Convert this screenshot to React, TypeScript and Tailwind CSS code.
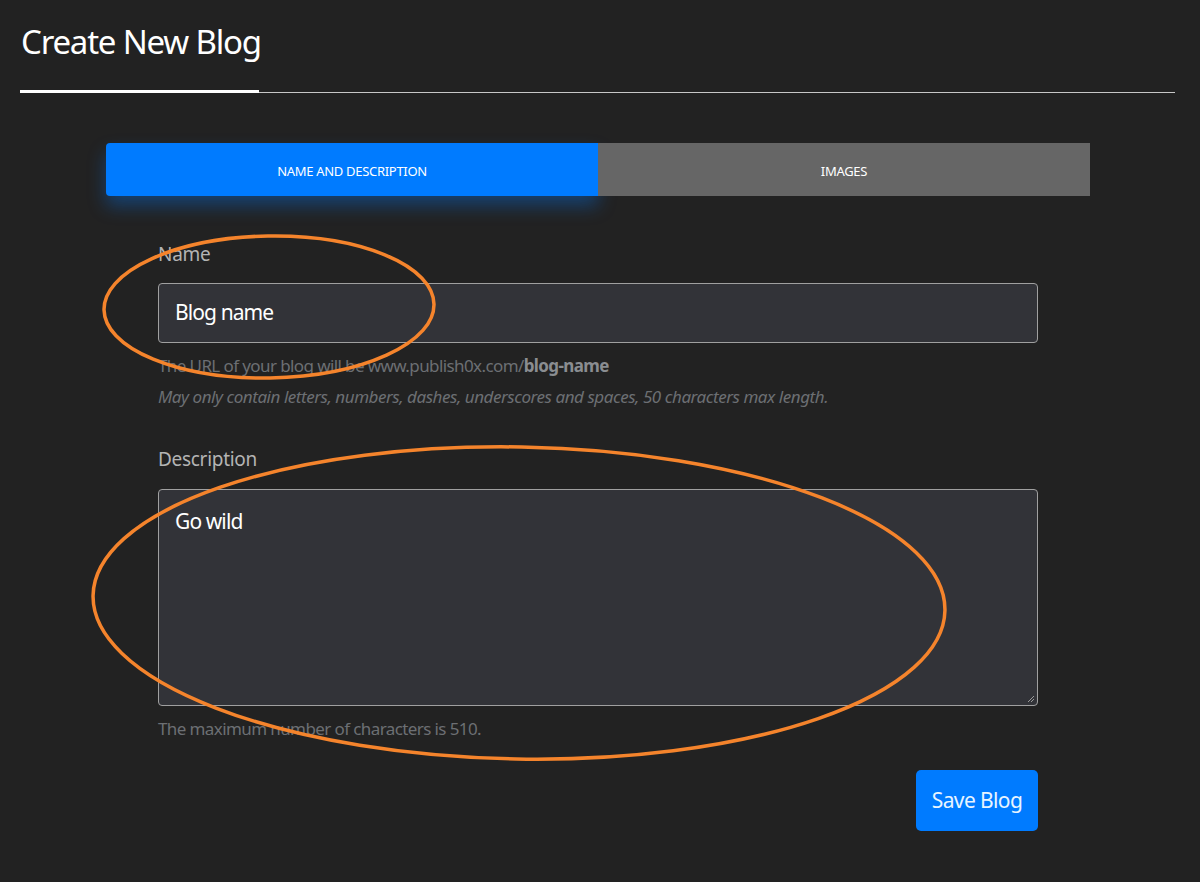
import React from "react";

const FONT = { fontFamily: '"Noto Sans", "Open Sans", Arial, sans-serif' };

function Annotations() {
  return (
    <svg className="pointer-events-none absolute left-0 top-0" width="1200" height="882" fill="none">
      <ellipse cx="269" cy="307" rx="165" ry="71" stroke="#f5842c" strokeWidth="3.5" transform="rotate(-1 269 307)" />
      <ellipse cx="519" cy="603" rx="426" ry="156" stroke="#f5842c" strokeWidth="3.5" transform="rotate(1 519 603)" />
    </svg>
  );
}

export default function App() {
  return (
    <div className="relative h-[882px] w-full overflow-hidden bg-[#222222] text-white" style={FONT}>
      {/* header */}
      <div className="px-5 pt-[20px]">
        <h1 className="pl-px text-[33px] leading-[44px] tracking-[-1.2px] text-white">Create New Blog</h1>
        <div className="mt-[26px] flex items-end">
          <div className="h-[3px] w-[239px] bg-white" />
          <div className="h-px w-[916px] bg-[#c8c8c8]" />
        </div>
      </div>

      {/* tabs + form */}
      <div className="ml-[106px] mt-[50px] w-[984px]">
        <div className="grid grid-cols-2">
          <button className="h-[53px] rounded-l-[4px] bg-[#007bff] pt-[4px] text-[13px] tracking-[-0.3px] text-white shadow-[0_10px_18px_rgba(0,123,255,0.35)]">
            NAME AND DESCRIPTION
          </button>
          <button className="h-[53px] bg-[#666666] pt-[4px] text-[13px] tracking-[-0.3px] text-white">IMAGES</button>
        </div>

        <div className="px-[52px] pt-[44px]">
          <label className="block text-[19px] leading-[28px] tracking-[-0.3px] text-[#b4b4b4]">Name</label>
          <div className="mt-[15px] flex h-[60px] items-center rounded-[4px] border border-[#a0a0a0] bg-[#323338] px-4 text-[21px] tracking-[-0.9px] text-white">
            Blog name
          </div>
          <p className="mt-[10px] text-[17px] leading-[26px] tracking-[-0.6px] text-[#6c6f73]">
            The URL of your blog will be www.publish0x.com/<b className="font-bold text-[#8a8d91]">blog-name</b>
          </p>
          <p className="mt-[6px] text-[17px] italic leading-[24px] tracking-[-0.45px] text-[#6c6f73]">
            May only contain letters, numbers, dashes, underscores and spaces, 50 characters max length.
          </p>

          <label className="mt-[36px] block text-[19px] leading-[28px] tracking-[-0.3px] text-[#b4b4b4]">Description</label>
          <div className="relative mt-[16px] h-[217px] rounded-[4px] border border-[#a0a0a0] bg-[#323338] px-4 pt-[16px] text-[21px] leading-[30px] tracking-[-0.9px] text-white">
            Go wild
            <svg className="absolute bottom-[2px] right-[2px]" width="9" height="9" viewBox="0 0 9 9">
              <path d="M8 2 L2 8 M8 5 L5 8" stroke="#9a9a9a" strokeWidth="1" />
            </svg>
          </div>
          <p className="mt-[11px] text-[17px] leading-[24px] tracking-[-0.6px] text-[#6c6f73]">
            The maximum number of characters is 510.
          </p>

          <div className="mt-[29px] flex justify-end">
            <button className="h-[61px] w-[122px] rounded-[5px] bg-[#007bff] text-[21px] tracking-[-0.6px] text-[#e8f4ff]">
              Save Blog
            </button>
          </div>
        </div>
      </div>

      <Annotations />
    </div>
  );
}
